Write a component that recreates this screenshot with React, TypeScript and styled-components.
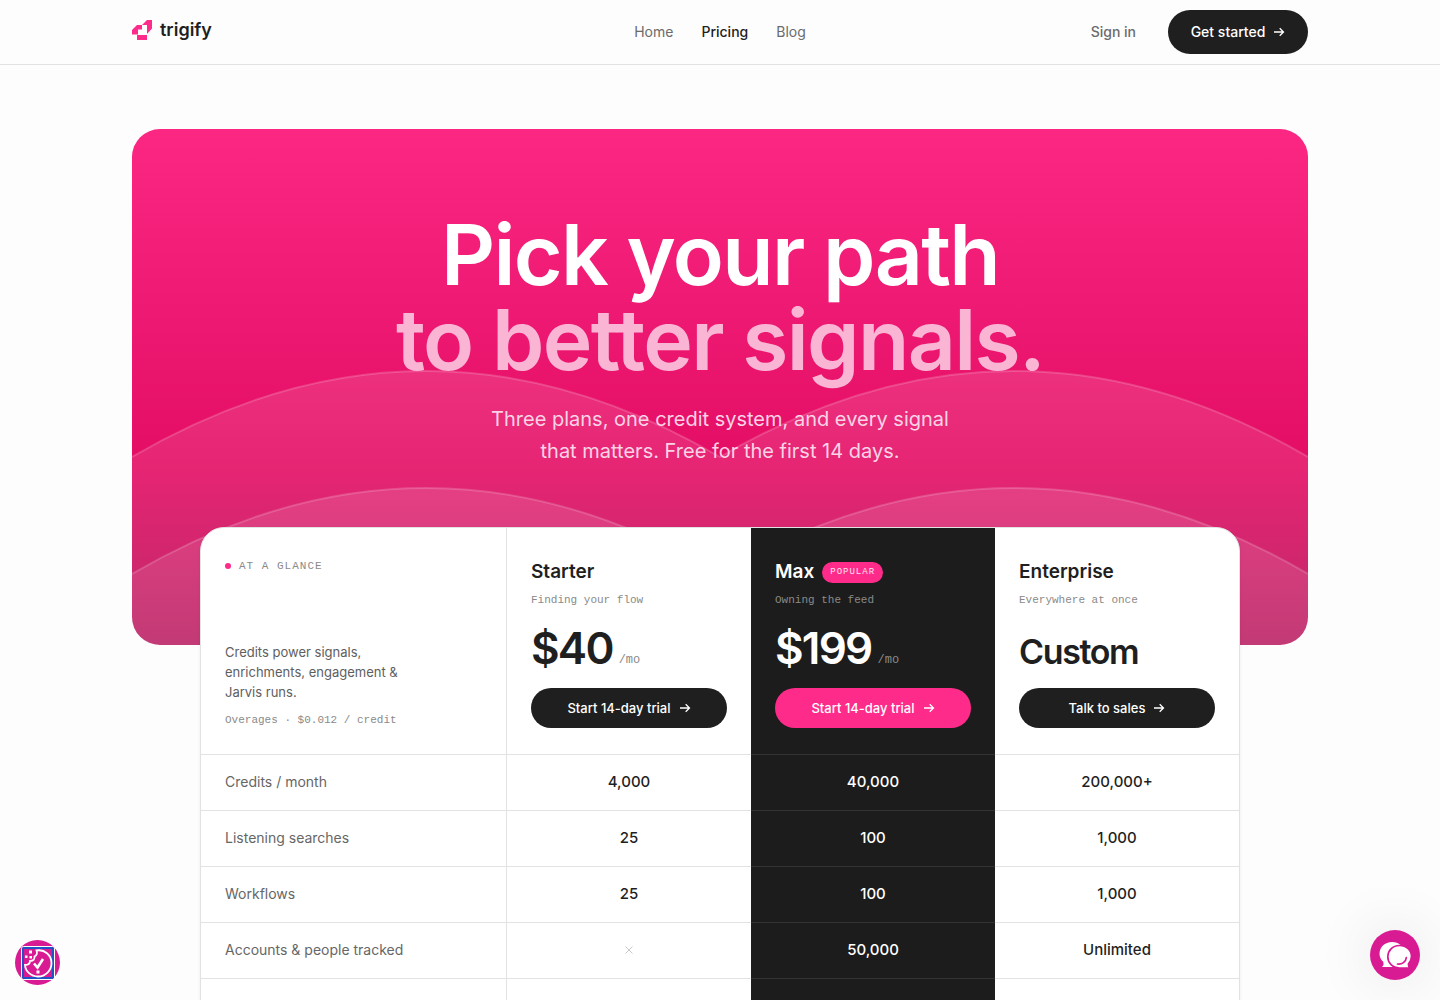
import React from "react";
import styled, { createGlobalStyle, css } from "styled-components";

const sans = `Inter, "Liberation Sans", sans-serif`;
const mono = `"Liberation Mono", monospace`;
const ink = "#1f1f1f";
const pink = "#ff2b8a";
const line = "#e2e2e2";

const GlobalStyle = createGlobalStyle`
  *, *::before, *::after { box-sizing: border-box; }
  body {
    margin: 0;
    background: #fdfdfd;
    color: ${ink};
    font-family: ${sans};
    -webkit-font-smoothing: antialiased;
  }
  h1, h2, p { margin: 0; }
  a { color: inherit; text-decoration: none; }
  button { font: inherit; border: 0; padding: 0; cursor: pointer; }
`;

const Page = styled.div`
  height: 100vh;
  overflow: hidden;
`;

const Container = styled.div`
  width: 100%;
  max-width: 1224px;
  margin: 0 auto;
  padding: 0 24px;
`;

const Header = styled.header`
  border-bottom: 1px solid ${line};
`;

const Bar = styled(Container)`
  display: grid;
  grid-template-columns: 1fr auto 1fr;
  align-items: center;
  height: 64px;
`;

const Brand = styled.a`
  display: flex;
  align-items: center;
  gap: 8px;
  padding-bottom: 4px;
  font-size: 18px;
  line-height: 24px;
  font-weight: 600;
`;

const Nav = styled.nav`
  display: flex;
  gap: 28px;
`;

const NavLink = styled.a<{ $active?: boolean }>`
  font-size: 14px;
  line-height: 20px;
  font-weight: ${(p) => (p.$active ? 500 : 400)};
  color: ${(p) => (p.$active ? ink : "#6b6b6b")};
`;

const Actions = styled.div`
  display: flex;
  justify-content: flex-end;
  align-items: center;
  gap: 32px;
`;

const SignIn = styled(NavLink)`
  font-weight: 500;
`;

const PillButton = styled.button<{ $accent?: boolean; $wide?: boolean }>`
  display: flex;
  align-items: center;
  justify-content: center;
  gap: 8px;
  width: ${(p) => (p.$wide ? "100%" : "140px")};
  height: ${(p) => (p.$wide ? "40px" : "44px")};
  border-radius: 22px;
  background: ${(p) => (p.$accent ? pink : ink)};
  color: #fff;
  font-size: ${(p) => (p.$wide ? "13px" : "14px")};
  font-weight: 500;
  line-height: 20px;
`;

const Hero = styled.section`
  position: relative;
  margin-top: 64px;
  padding: 83px 24px 178px;
  border-radius: 28px;
  overflow: hidden;
  text-align: center;
  background: linear-gradient(180deg, #fb2783 0%, #e30d64 66%, #b81a5f 100%);
`;

const Hills = styled.svg`
  position: absolute;
  inset: 0;
  width: 100%;
  height: 100%;
`;

const Title = styled.h1`
  position: relative;
  font-size: 84px;
  line-height: 85px;
  font-weight: 600;
  letter-spacing: -0.02em;
  color: #fff;
`;

const TitleSoft = styled.span`
  display: block;
  color: #fab5d4;
`;

const Lead = styled.p`
  position: relative;
  max-width: 520px;
  margin: 21px auto 0;
  font-size: 20px;
  line-height: 32px;
  color: #fbd3e6;
`;

const PlanCard = styled.section`
  position: relative;
  width: calc(100% - 136px);
  margin: -118px auto 0;
  border: 1px solid ${line};
  border-radius: 24px;
  overflow: hidden;
  background: #fff;
  box-shadow: 0 2px 4px rgba(0, 0, 0, 0.06);
`;

const Table = styled.table`
  width: 100%;
  table-layout: fixed;
  border-collapse: separate;
  border-spacing: 0;
`;

const LabelCol = styled.col`
  width: 306px;
`;

const darkCell = css`
  background: #1c1c1c;
  color: #fff;
  border-bottom-color: #333;
`;

const HeadCell = styled.th<{ $dark?: boolean; $first?: boolean }>`
  padding: ${(p) => (p.$first ? "30px" : "32px")} 24px 26px;
  vertical-align: top;
  text-align: left;
  font-weight: 400;
  border-bottom: 1px solid ${line};
  ${(p) => p.$first && css`border-right: 1px solid ${line};`}
  ${(p) => p.$dark && darkCell}
`;

const Glance = styled.div`
  display: flex;
  align-items: center;
  gap: 8px;
  margin-bottom: 68px;
  font-family: ${mono};
  font-size: 11px;
  line-height: 16px;
  letter-spacing: 1px;
  color: #8a8a8a;

  &::before {
    content: "";
    width: 6px;
    height: 6px;
    border-radius: 50%;
    background: ${pink};
  }
`;

const Note = styled.p`
  max-width: 200px;
  margin-bottom: 10px;
  font-size: 13px;
  line-height: 20px;
  color: #5e5e5e;
`;

const MonoText = styled.p`
  font-family: ${mono};
  font-size: 11px;
  line-height: 16px;
  color: #8a8a8a;
`;

const PlanName = styled.h2`
  display: flex;
  align-items: center;
  gap: 8px;
  margin-bottom: 8px;
  font-size: 19px;
  line-height: 24px;
  font-weight: 600;
`;

const Badge = styled.span`
  padding: 0 8px;
  border-radius: 11px;
  background: ${pink};
  color: #ffe3f0;
  font-family: ${mono};
  font-size: 9px;
  line-height: 21px;
  font-weight: 400;
  letter-spacing: 1px;
`;

const PriceRow = styled.div`
  display: flex;
  align-items: flex-end;
  gap: 6px;
  height: 44px;
  margin: 18px 0;
`;

const Price = styled.span<{ $word?: boolean }>`
  font-size: ${(p) => (p.$word ? "34px" : "44px")};
  line-height: ${(p) => (p.$word ? "36px" : "44px")};
  font-weight: 600;
  letter-spacing: -0.04em;
`;

const Per = styled(MonoText)`
  font-size: 12px;
  line-height: 20px;
`;

const cellBase = css`
  height: 56px;
  padding: 0 24px 2px;
  border-bottom: 1px solid ${line};
  font-size: 15px;
  line-height: 20px;
`;

const RowLabel = styled.th`
  ${cellBase}
  border-right: 1px solid ${line};
  text-align: left;
  font-size: 14px;
  font-weight: 400;
  color: #666;
`;

const Cell = styled.td<{ $dark?: boolean }>`
  ${cellBase}
  text-align: center;
  font-weight: 500;
  ${(p) => p.$dark && darkCell}

  svg { display: inline-block; vertical-align: middle; }
`;

const FloatButton = styled.button<{ $side: "left" | "right" }>`
  position: fixed;
  bottom: ${(p) => (p.$side === "left" ? "15px" : "20px")};
  ${(p) => (p.$side === "left" ? "left: 15px;" : "right: 20px;")}
  display: grid;
  place-items: center;
  width: ${(p) => (p.$side === "left" ? "45px" : "50px")};
  height: ${(p) => (p.$side === "left" ? "45px" : "50px")};
  border-radius: 50%;
  background: #d81b92;
  ${(p) => p.$side === "right" && css`box-shadow: 0 0 60px rgba(0, 0, 0, 0.12);`}
`;

const Arrow = () => (
  <svg width="12" height="12" viewBox="0 0 12 12" fill="none" stroke="currentColor" strokeWidth="1.3" aria-hidden="true">
    <path d="M1 6H10.500M6.700 2.200L10.500 6L6.700 9.800" />
  </svg>
);

const Logo = () => (
  <svg width="20" height="20" viewBox="0 0 20 20" fill={pink} aria-hidden="true">
    <path d="M0 10L5 5H10L15 0H20V8.5L15 14V5H10V9.5H6V14.5H0Z" />
    <path d="M5 15H15V20H5Z" />
  </svg>
);

const Cross = () => (
  <svg width="8" height="8" viewBox="0 0 8 8" stroke="#c8c8c8" strokeWidth="1" role="img" aria-label="Not included">
    <path d="M0.5 0.5L7.5 7.5M7.5 0.5L0.5 7.5" />
  </svg>
);

const CookieIcon = () => (
  <svg width="34" height="34" viewBox="0 0 34 34" fill="none" aria-hidden="true">
    <rect x="0.5" y="0.5" width="33" height="33" rx="2" stroke="#fff" />
    <rect x="2" y="2" width="30" height="30" rx="1" stroke="#1f53c4" strokeWidth="2" />
    <path d="M15.500 4.500C23.500 3 30.500 9 30.500 17C30.500 24.500 24.500 30.500 17 30.500C10 30.500 4.500 25.500 4 19C8 19 9 17 9 15C12.500 15 14 13 13.500 10.500C16 9.500 16.500 7 15.500 4.500Z" stroke="#fff" strokeWidth="1.800" />
    <path d="M13 17.500L16.500 21.500L22 13" stroke="#fff" strokeWidth="2.600" />
    <path d="M15.500 24.500H18.500V27.500H15.500ZM8 4.500H11V7.500H8ZM4 9.500H6.500V12H4ZM8.500 10H11V12.500H8.500Z" fill="#fff" />
  </svg>
);

const ChatIcon = () => (
  <svg width="34" height="30" viewBox="0 0 34 30" fill="none" aria-hidden="true">
    <path d="M14 2C21 2 26 6.500 26 13C26 20 21 27 14 27H4C5.800 25.500 6 23.500 5 21.500C2.800 19.500 1.500 17 1.500 13.500C1.500 7 7 2 14 2Z" fill="#fff" />
    <path d="M21.500 5.500C28.500 5.500 33.500 10.500 33.500 16.500C33.500 19.500 32 22 30.500 23.800C30.200 25.500 30.800 26.500 32 28H21.500C14.500 28 9.800 23 9.800 16.800C9.800 10.500 14.500 5.500 21.500 5.500Z" fill="#fff" stroke="#d81b92" strokeWidth="1.700" />
    <path d="M19.500 24C24 24.500 28 22 28.300 17.500" stroke="#d81b92" strokeWidth="1.700" strokeLinecap="round" />
  </svg>
);

/* Two rows of arches rising behind the headline. */
const HeroHills = () => (
  <Hills viewBox="0 0 1176 516" preserveAspectRatio="none" aria-hidden="true">
    <defs>
      <linearGradient id="hill" x1="0" y1="0" x2="0" y2="1">
        <stop offset="0" stopColor="#fff" stopOpacity="0.12" />
        <stop offset="1" stopColor="#fff" stopOpacity="0.06" />
      </linearGradient>
    </defs>
    {[0, 117].map((y) => (
      <g key={y} transform={`translate(0 ${y})`}>
        <path d="M0 328Q294 156 588 328Q882 156 1176 328V516H0Z" fill="url(#hill)" />
        <path d="M0 328Q294 156 588 328Q882 156 1176 328" fill="none" stroke="#fff" strokeOpacity="0.18" strokeWidth="2" />
      </g>
    ))}
  </Hills>
);

const plans = [
  { name: "Starter", tag: "Finding your flow", price: "$40", cta: "Start 14-day trial" },
  { name: "Max", tag: "Owning the feed", price: "$199", cta: "Start 14-day trial", popular: true },
  { name: "Enterprise", tag: "Everywhere at once", price: "Custom", cta: "Talk to sales", custom: true },
];

const rows: [string, (string | null)[]][] = [
  ["Credits / month", ["4,000", "40,000", "200,000+"]],
  ["Listening searches", ["25", "100", "1,000"]],
  ["Workflows", ["25", "100", "1,000"]],
  ["Accounts & people tracked", [null, "50,000", "Unlimited"]],
  ["", ["", "", ""]],
];

export default function App() {
  return (
    <Page>
      <GlobalStyle />
      <Header>
        <Bar>
          <Brand href="#">
            <Logo />
            trigify
          </Brand>
          <Nav>
            <NavLink href="#">Home</NavLink>
            <NavLink href="#" $active aria-current="page">Pricing</NavLink>
            <NavLink href="#">Blog</NavLink>
          </Nav>
          <Actions>
            <SignIn href="#">Sign in</SignIn>
            <PillButton>
              Get started <Arrow />
            </PillButton>
          </Actions>
        </Bar>
      </Header>

      <Container as="main">
        <Hero>
          <HeroHills />
          <Title>
            Pick your path <TitleSoft>to better signals.</TitleSoft>
          </Title>
          <Lead>
            Three plans, one credit system, and every signal
            <br />
            that matters. Free for the first 14 days.
          </Lead>
        </Hero>

        <PlanCard>
          <Table>
            <colgroup>
              <LabelCol />
              <col />
              <col />
              <col />
            </colgroup>
            <thead>
              <tr>
                <HeadCell $first>
                  <Glance>AT A GLANCE</Glance>
                  <Note>Credits power signals, enrichments, engagement &amp; Jarvis runs.</Note>
                  <MonoText>Overages · $0.012 / credit</MonoText>
                </HeadCell>
                {plans.map((p) => (
                  <HeadCell key={p.name} scope="col" $dark={p.popular}>
                    <PlanName>
                      {p.name}
                      {p.popular && <Badge>POPULAR</Badge>}
                    </PlanName>
                    <MonoText>{p.tag}</MonoText>
                    <PriceRow>
                      <Price $word={p.custom}>{p.price}</Price>
                      {!p.custom && <Per>/mo</Per>}
                    </PriceRow>
                    <PillButton $wide $accent={p.popular}>
                      {p.cta} <Arrow />
                    </PillButton>
                  </HeadCell>
                ))}
              </tr>
            </thead>
            <tbody>
              {rows.map(([label, values], r) => (
                <tr key={r}>
                  <RowLabel scope="row">{label}</RowLabel>
                  {values.map((v, i) => (
                    <Cell key={i} $dark={i === 1}>{v === null ? <Cross /> : v}</Cell>
                  ))}
                </tr>
              ))}
            </tbody>
          </Table>
        </PlanCard>
      </Container>

      <FloatButton $side="left" aria-label="Cookie preferences">
        <CookieIcon />
      </FloatButton>
      <FloatButton $side="right" aria-label="Open chat">
        <ChatIcon />
      </FloatButton>
    </Page>
  );
}
